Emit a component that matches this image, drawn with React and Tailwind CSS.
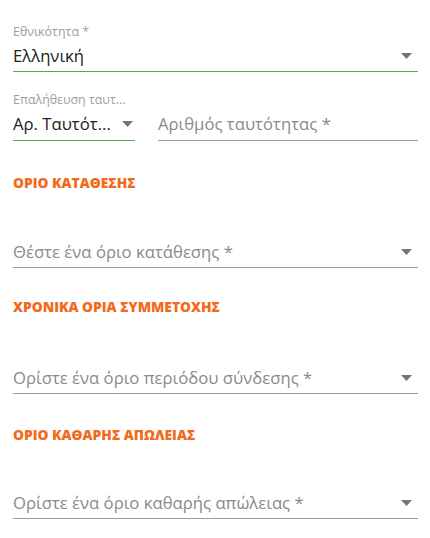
import React from 'react';

function Caret() {
  return (
    <svg width="11" height="6" viewBox="0 0 11 6" className="shrink-0">
      <path d="M0 0h11L5.5 6z" fill="#757575" />
    </svg>
  );
}

function SelectField({ placeholder, className = '' }) {
  return (
    <div className={`flex h-[32px] items-center justify-between border-b border-[#9e9e9e] pr-[6px] ${className}`}>
      <span className="text-[16.7px] text-[#8a8a8a]">{placeholder}</span>
      <Caret />
    </div>
  );
}

function Heading({ children, className = '' }) {
  return (
    <div className={`text-[13.8px] font-extrabold leading-[16px] text-[#f26a1b] ${className}`}>
      {children}
    </div>
  );
}

export default function App() {
  return (
    <div className="min-h-screen bg-white" style={{ fontFamily: '"Open Sans", "Noto Sans", sans-serif' }}>
      <div className="w-[418px] pl-[13px] pt-[24px]">
        <div className="text-[12.4px] leading-[16px] text-[#9e9e9e]">Εθνικότητα *</div>
        <div className="flex h-[31px] items-center justify-between pr-[6px]">
          <span className="text-[16.7px] text-[#222]">Ελληνική</span>
          <Caret />
        </div>
        <div className="h-[1px] bg-[#4caf50]" />

        <div className="mt-[20px] flex items-end gap-[23px]">
          <div className="w-[122px]">
            <div className="truncate text-[12.4px] leading-[16px] text-[#9e9e9e]">Επαλήθευση ταυτ...</div>
            <div className="flex h-[33px] items-center justify-between border-b border-b-[#4caf50] pr-[2px]">
              <span className="whitespace-nowrap text-[16.7px] text-[#222]">Αρ. Ταυτότ...</span>
              <Caret />
            </div>
          </div>
          <div className="flex h-[33px] flex-1 items-center border-b border-[#9e9e9e]">
            <span className="text-[16.7px] text-[#8a8a8a]">Αριθμός ταυτότητας *</span>
          </div>
        </div>

        <Heading className="mt-[34px]">ΟΡΙΟ ΚΑΤΑΘΕΣΗΣ</Heading>
        <SelectField placeholder="Θέστε ένα όριο κατάθεσης *" className="mt-[45px]" />

        <Heading className="mt-[31px]">ΧΡΟΝΙΚΑ ΟΡΙΑ ΣΥΜΜΕΤΟΧΗΣ</Heading>
        <SelectField placeholder="Ορίστε ένα όριο περιόδου σύνδεσης *" className="mt-[47px]" />

        <Heading className="mt-[33px]">ΟΡΙΟ ΚΑΘΑΡΗΣ ΑΠΩΛΕΙΑΣ</Heading>
        <SelectField placeholder="Ορίστε ένα όριο καθαρής απώλειας *" className="mt-[44px]" />
      </div>
    </div>
  );
}
